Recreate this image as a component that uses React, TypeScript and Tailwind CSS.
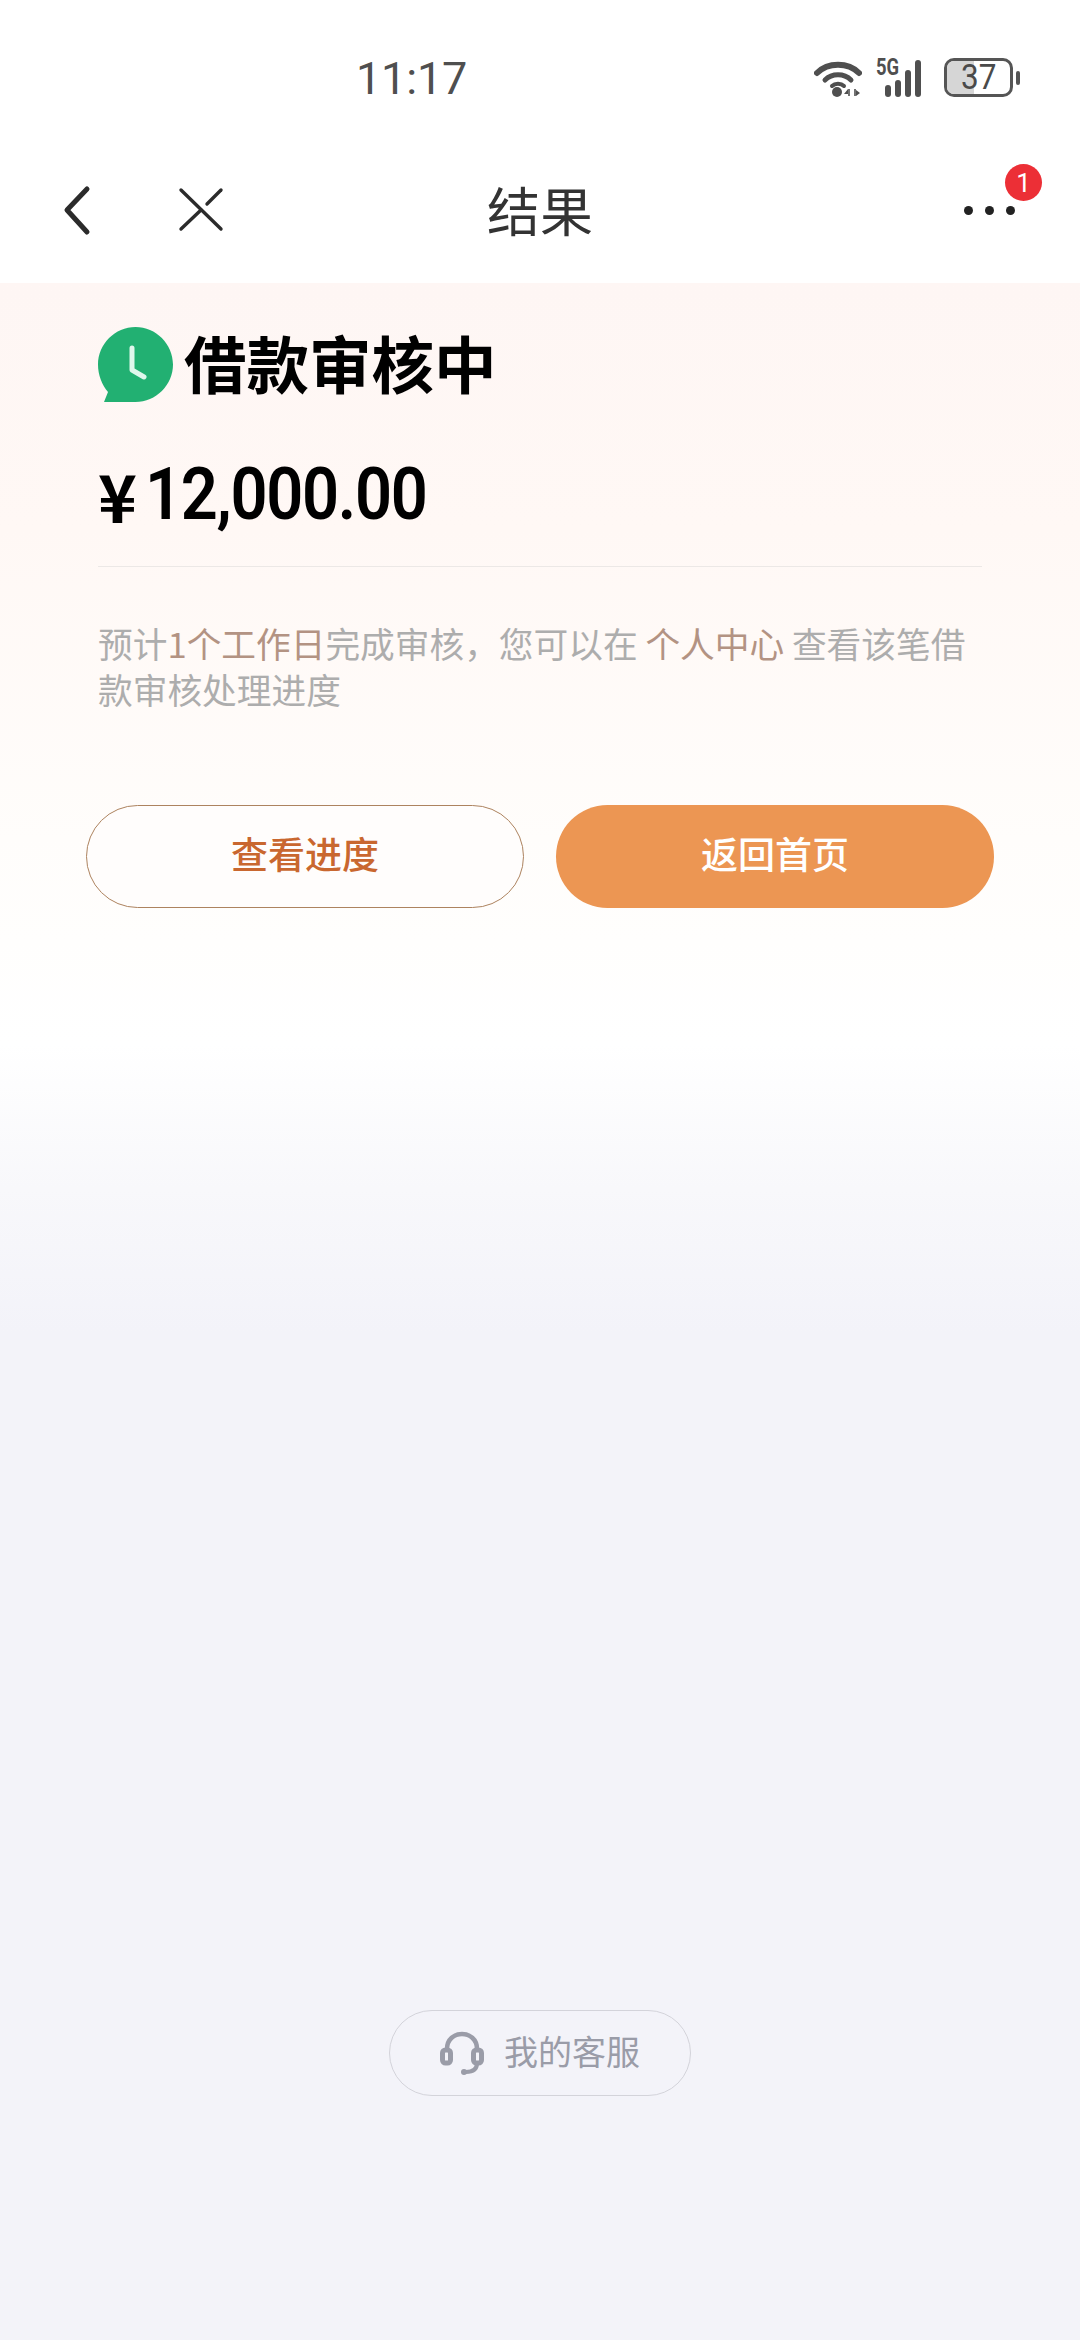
// 借款结果页
const CJK = "font-['Noto_Sans_CJK_SC','Noto_Sans',sans-serif]";

function WifiIcon() {
  return (
    <svg width="48" height="37" viewBox="0 0 48 37" fill="none">
      <path d="M3 13 C14 2 34 2 45 13" stroke="#4f4f4f" strokeWidth="6" strokeLinecap="round" />
      <path d="M11 20 C18 13 30 13 37 20" stroke="#4f4f4f" strokeWidth="5" strokeLinecap="round" />
      <path d="M18 26 C21 23 27 23 30 26" stroke="#4f4f4f" strokeWidth="4" strokeLinecap="round" />
      <circle cx="23" cy="32" r="5" fill="#4f4f4f" />
      <path d="M35 36V29M41 29v7" stroke="#4f4f4f" strokeWidth="1.6" />
      <path d="M34 34l-4 0 4-5zM42 30l4 3-4 3z" fill="#4f4f4f" />
    </svg>
  );
}

function SignalBars() {
  return (
    <svg width="46" height="37" viewBox="0 0 46 37" fill="#4f4f4f">
      <rect x="8" y="25" width="6" height="12" rx="3" />
      <rect x="18" y="20" width="6" height="17" rx="3" />
      <rect x="28" y="10" width="6" height="27" rx="3" />
      <rect x="38" y="0" width="6" height="37" rx="3" />
    </svg>
  );
}

function StatusBar() {
  return (
    <div className="flex h-[140px] items-start bg-white pt-[52px] pl-[356px] pr-[60px]">
      <span className="font-['Roboto',sans-serif] text-[45px] leading-[53px] tracking-[-0.2px] text-[#4f4f4f]">11:17</span>
      <div className="ml-auto flex items-start">
        <div className="mt-[8px]">
          <WifiIcon />
        </div>
        <div className="relative ml-[15px] mt-[8px] h-[37px] w-[52px]">
          <SignalBars />
          <span className="absolute left-[-1px] top-[-4px] origin-left scale-x-[0.8] font-['Roboto',sans-serif] text-[23px] font-bold leading-[24px] text-[#4f4f4f]">5G</span>
        </div>
        <div className="ml-[15px] mt-[6px] flex items-center">
          <div className="relative flex h-[39px] w-[69px] items-center justify-center overflow-hidden rounded-[10px] border-[3px] border-[#555555]">
            <div className="absolute inset-y-0 left-0 w-[27px] bg-[#d6d6d6]" />
            <span className="relative scale-x-[0.9] font-['Roboto',sans-serif] text-[35px] leading-none text-[#4a4a4a]">37</span>
          </div>
          <div className="ml-[3px] h-[14px] w-[4px] rounded-full bg-[#555555]" />
        </div>
      </div>
    </div>
  );
}

function NavBar() {
  return (
    <div className="relative flex h-[143px] items-center justify-center bg-white pb-[5px]">
      <svg className="absolute left-[60px] top-[43px]" width="36" height="56" viewBox="0 0 36 56" fill="none">
        <path d="M27 6 L7 27 L27 49" stroke="#2b2b2b" strokeWidth="5" strokeLinecap="round" strokeLinejoin="round" />
      </svg>
      <svg className="absolute left-[176px] top-[46px]" width="48" height="46" viewBox="0 0 48 46" fill="none">
        <path d="M5 4 L45 43" stroke="#2b2b2b" strokeWidth="3.4" strokeLinecap="round" />
        <path d="M5 43 L25 24" stroke="#2b2b2b" strokeWidth="3.4" strokeLinecap="round" />
        <path d="M31 18 L45 4" stroke="#2b2b2b" strokeWidth="3.4" strokeLinecap="round" />
      </svg>
      <h1 className={`${CJK} text-[53px] leading-none text-[#333333]`}>结果</h1>
      <div className="absolute left-[964px] top-[66px] flex gap-[12px]">
        <span className="h-[9px] w-[9px] rounded-full bg-[#222222]" />
        <span className="h-[9px] w-[9px] rounded-full bg-[#222222]" />
        <span className="h-[9px] w-[9px] rounded-full bg-[#222222]" />
      </div>
      <span className="absolute left-[1005px] top-[24px] flex h-[37px] w-[37px] items-center justify-center rounded-full bg-[#ec2f36] font-['Roboto',sans-serif] text-[26px] leading-none text-white">1</span>
    </div>
  );
}

function ClockBubble() {
  return (
    <svg width="75" height="75" viewBox="0 0 75 75" fill="none">
      <path d="M37.5 0 C58 0 75 17 75 37.5 C75 58 58 75 37.5 75 L6 75 L10 65 C4 58 0 48 0 37.5 C0 17 17 0 37.5 0Z" fill="#22b072" />
      <path d="M34 21 V43 L46 50" stroke="#dff7ec" strokeWidth="5" strokeLinecap="round" strokeLinejoin="round" />
    </svg>
  );
}

function HeadsetIcon() {
  return (
    <svg width="44" height="44" viewBox="0 0 44 44" fill="none">
      <path d="M7 18 C7 -2 37 -2 37 18" stroke="#9a9ca8" strokeWidth="4.5" />
      <rect x="2.5" y="19" width="8" height="13" rx="3" stroke="#9a9ca8" strokeWidth="5" />
      <rect x="33.5" y="19" width="8" height="13" rx="3" stroke="#9a9ca8" strokeWidth="5" />
      <path d="M37 32 C37 38 33 41 26 41" stroke="#9a9ca8" strokeWidth="4" />
      <circle cx="24" cy="41" r="3" fill="#9a9ca8" />
    </svg>
  );
}

export default function App() {
  return (
    <div className={`${CJK} flex h-[2340px] w-[1080px] flex-col overflow-hidden bg-white`}>
      <StatusBar />
      <NavBar />
      <main className="flex flex-1 flex-col bg-[linear-gradient(180deg,#fef6f4_0%,#fff8f5_12%,#fffdfb_27%,#ffffff_37%,#f8f8fb_44%,#f3f3f9_51%,#f3f3f9_100%)]">
        <section className="px-[98px]">
          <div className="mt-[44px] flex h-[75px] items-center">
            <ClockBubble />
            <h2 className="ml-[11px] pb-[5px] text-[62.5px] font-bold leading-none text-black">借款审核中</h2>
          </div>
          <p className="mt-[49px] flex h-[86px] items-center font-['Roboto',sans-serif] text-[73px] font-semibold leading-none text-black">
            <span className={`${CJK} mr-[8px] text-[66px] font-bold`}>¥</span>
            <span className="origin-left scale-x-[0.89] tracking-[-1.5px]">12,000.00</span>
          </p>
          <div className="mt-[29px] h-[1px] bg-[#ece8e6]" />
          <p className="mt-[53px] text-[34.7px] leading-[46px] text-[#adadad]">
            预计<span className="text-[#b39383]">1个工作日</span>完成审核，您可以在 <span className="text-[#b39383]">个人中心</span> 查看该笔借款审核处理进度
          </p>
        </section>
        <div className="mt-[93px] flex gap-[32px] px-[86px]">
          <button className="flex h-[103px] w-[438px] items-center justify-center rounded-full border border-[#ad835f] bg-[#fffdfc] pb-[6px] text-[37px] font-medium text-[#c9672f]">查看进度</button>
          <button className="flex h-[103px] w-[438px] items-center justify-center rounded-full bg-[#ec9653] pb-[6px] text-[37px] font-medium text-white">返回首页</button>
        </div>
        <div className="mb-[244px] mt-auto flex justify-center">
          <div className="flex h-[86px] w-[302px] items-center justify-center gap-[20px] rounded-full border border-[#d3d3da]">
            <HeadsetIcon />
            <span className="pb-[5px] text-[34px] leading-none text-[#9a9ca8]">我的客服</span>
          </div>
        </div>
      </main>
    </div>
  );
}
